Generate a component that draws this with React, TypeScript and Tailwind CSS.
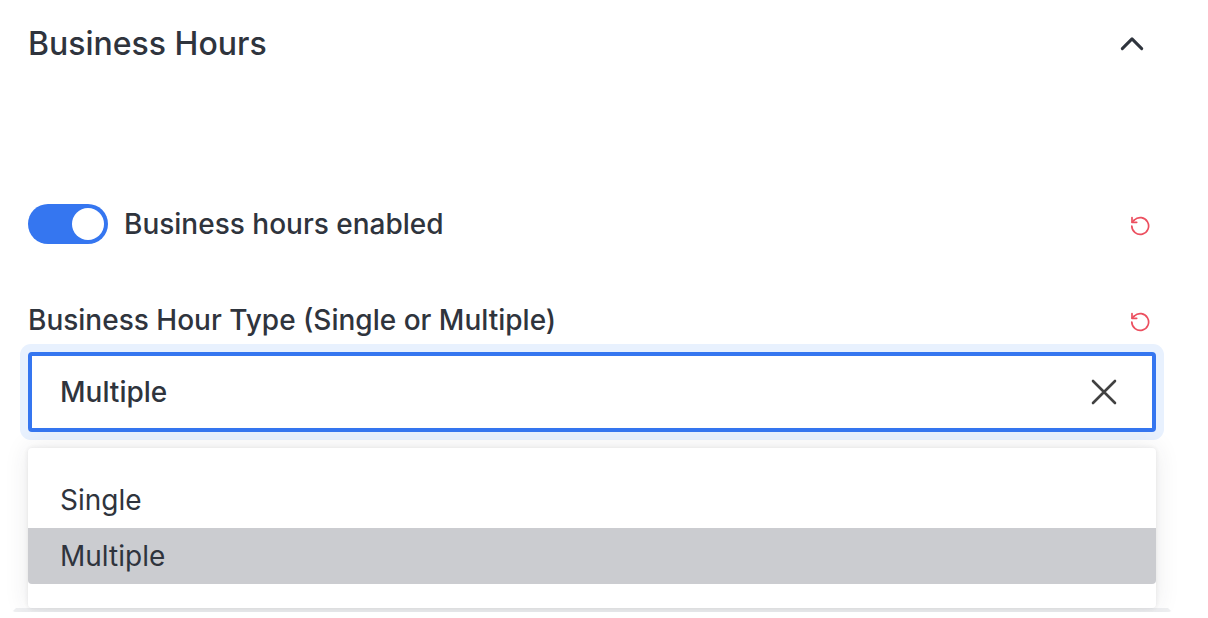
import { useState } from 'react';

const OPTIONS = ['Single', 'Multiple'];

function ResetButton({ label }: { label: string }) {
  return (
    <button type="button" aria-label={label} className="mr-1 flex size-6 items-center justify-center text-[#ec4f5f]">
      <svg viewBox="0 0 24 24" className="size-6" fill="none" stroke="currentColor" strokeWidth="1.7" strokeLinecap="round" strokeLinejoin="round">
        <path d="M3.8 14A8.4 8.4 0 1 0 6.3 8" />
        <path d="M4 5.6V10.3H8.7" />
        <path d="M4.2 10.1L6.3 8" />
      </svg>
    </button>
  );
}

export default function App() {
  const [expanded, setExpanded] = useState(true);
  const [enabled, setEnabled] = useState(true);
  const [value, setValue] = useState('Multiple');

  return (
    <main className="bg-white pr-9 pl-3 font-['Inter',sans-serif] text-[#2f343d]">
      <section className="rounded border-x-4 border-b-4 border-x-transparent border-b-[#eeeff1] px-3 pb-44">
        <header className="flex items-center justify-between pt-5">
          <h2 className="text-[32px] leading-12 font-medium">Business Hours</h2>
          <button
            type="button"
            aria-label="Toggle section"
            aria-expanded={expanded}
            onClick={() => setExpanded(!expanded)}
            className="flex size-12 items-center justify-center"
          >
            <svg viewBox="0 0 32 32" className="size-8" fill="none" stroke="currentColor" strokeWidth="3" strokeLinecap="round" strokeLinejoin="round">
              <path d="M6.3 20.6L16 10.9L25.7 20.6" />
            </svg>
          </button>
        </header>

        <div className="mt-34 flex items-center justify-between">
          <label className="flex items-center gap-4 text-[28px] leading-10 font-medium">
            <input
              type="checkbox"
              role="switch"
              checked={enabled}
              onChange={() => setEnabled(!enabled)}
              className="h-10 w-20 appearance-none rounded-full bg-gray-400 p-1 before:block before:size-8 before:rounded-full before:bg-white checked:bg-[#3576f0] checked:before:ml-10"
            />
            Business hours enabled
          </label>
          <ResetButton label="Reset business hours enabled" />
        </div>

        <div className="mt-14 flex items-center justify-between">
          <label htmlFor="hour-type" className="text-[28px] leading-10 font-medium">
            Business Hour Type (Single or Multiple)
          </label>
          <ResetButton label="Reset business hour type" />
        </div>

        <div className="relative mt-3">
          <div className="flex h-20 items-center rounded border-4 border-[#3576f0] bg-white pr-8 pl-7 ring-8 ring-[#e8f1fe]">
            <input
              id="hour-type"
              role="combobox"
              aria-expanded="true"
              aria-controls="hour-type-options"
              value={value}
              onChange={(e) => setValue(e.target.value)}
              className="min-w-0 flex-1 bg-transparent text-[28px] leading-10 font-medium outline-none"
            />
            <button type="button" aria-label="Clear" onClick={() => setValue('')} className="text-[#414141]">
              <svg viewBox="0 0 32 32" className="size-8" fill="none" stroke="currentColor" strokeWidth="2.6" strokeLinecap="round">
                <path d="M5 5L27 27M27 5L5 27" />
              </svg>
            </button>
          </div>
          <ul
            id="hour-type-options"
            role="listbox"
            aria-label="Business hour type"
            className="absolute inset-x-0 top-full mt-4 rounded bg-white py-6 shadow-[0_0_4px_rgba(47,52,61,0.1),0_0_24px_rgba(47,52,61,0.1)]"
          >
            {OPTIONS.map((option) => (
              <li
                key={option}
                role="option"
                aria-selected={option === value}
                onClick={() => setValue(option)}
                className="cursor-pointer px-8 py-2 text-[28px] leading-10 aria-selected:rounded-b aria-selected:bg-[#cbccd0]"
              >
                {option}
              </li>
            ))}
          </ul>
        </div>
      </section>
    </main>
  );
}
